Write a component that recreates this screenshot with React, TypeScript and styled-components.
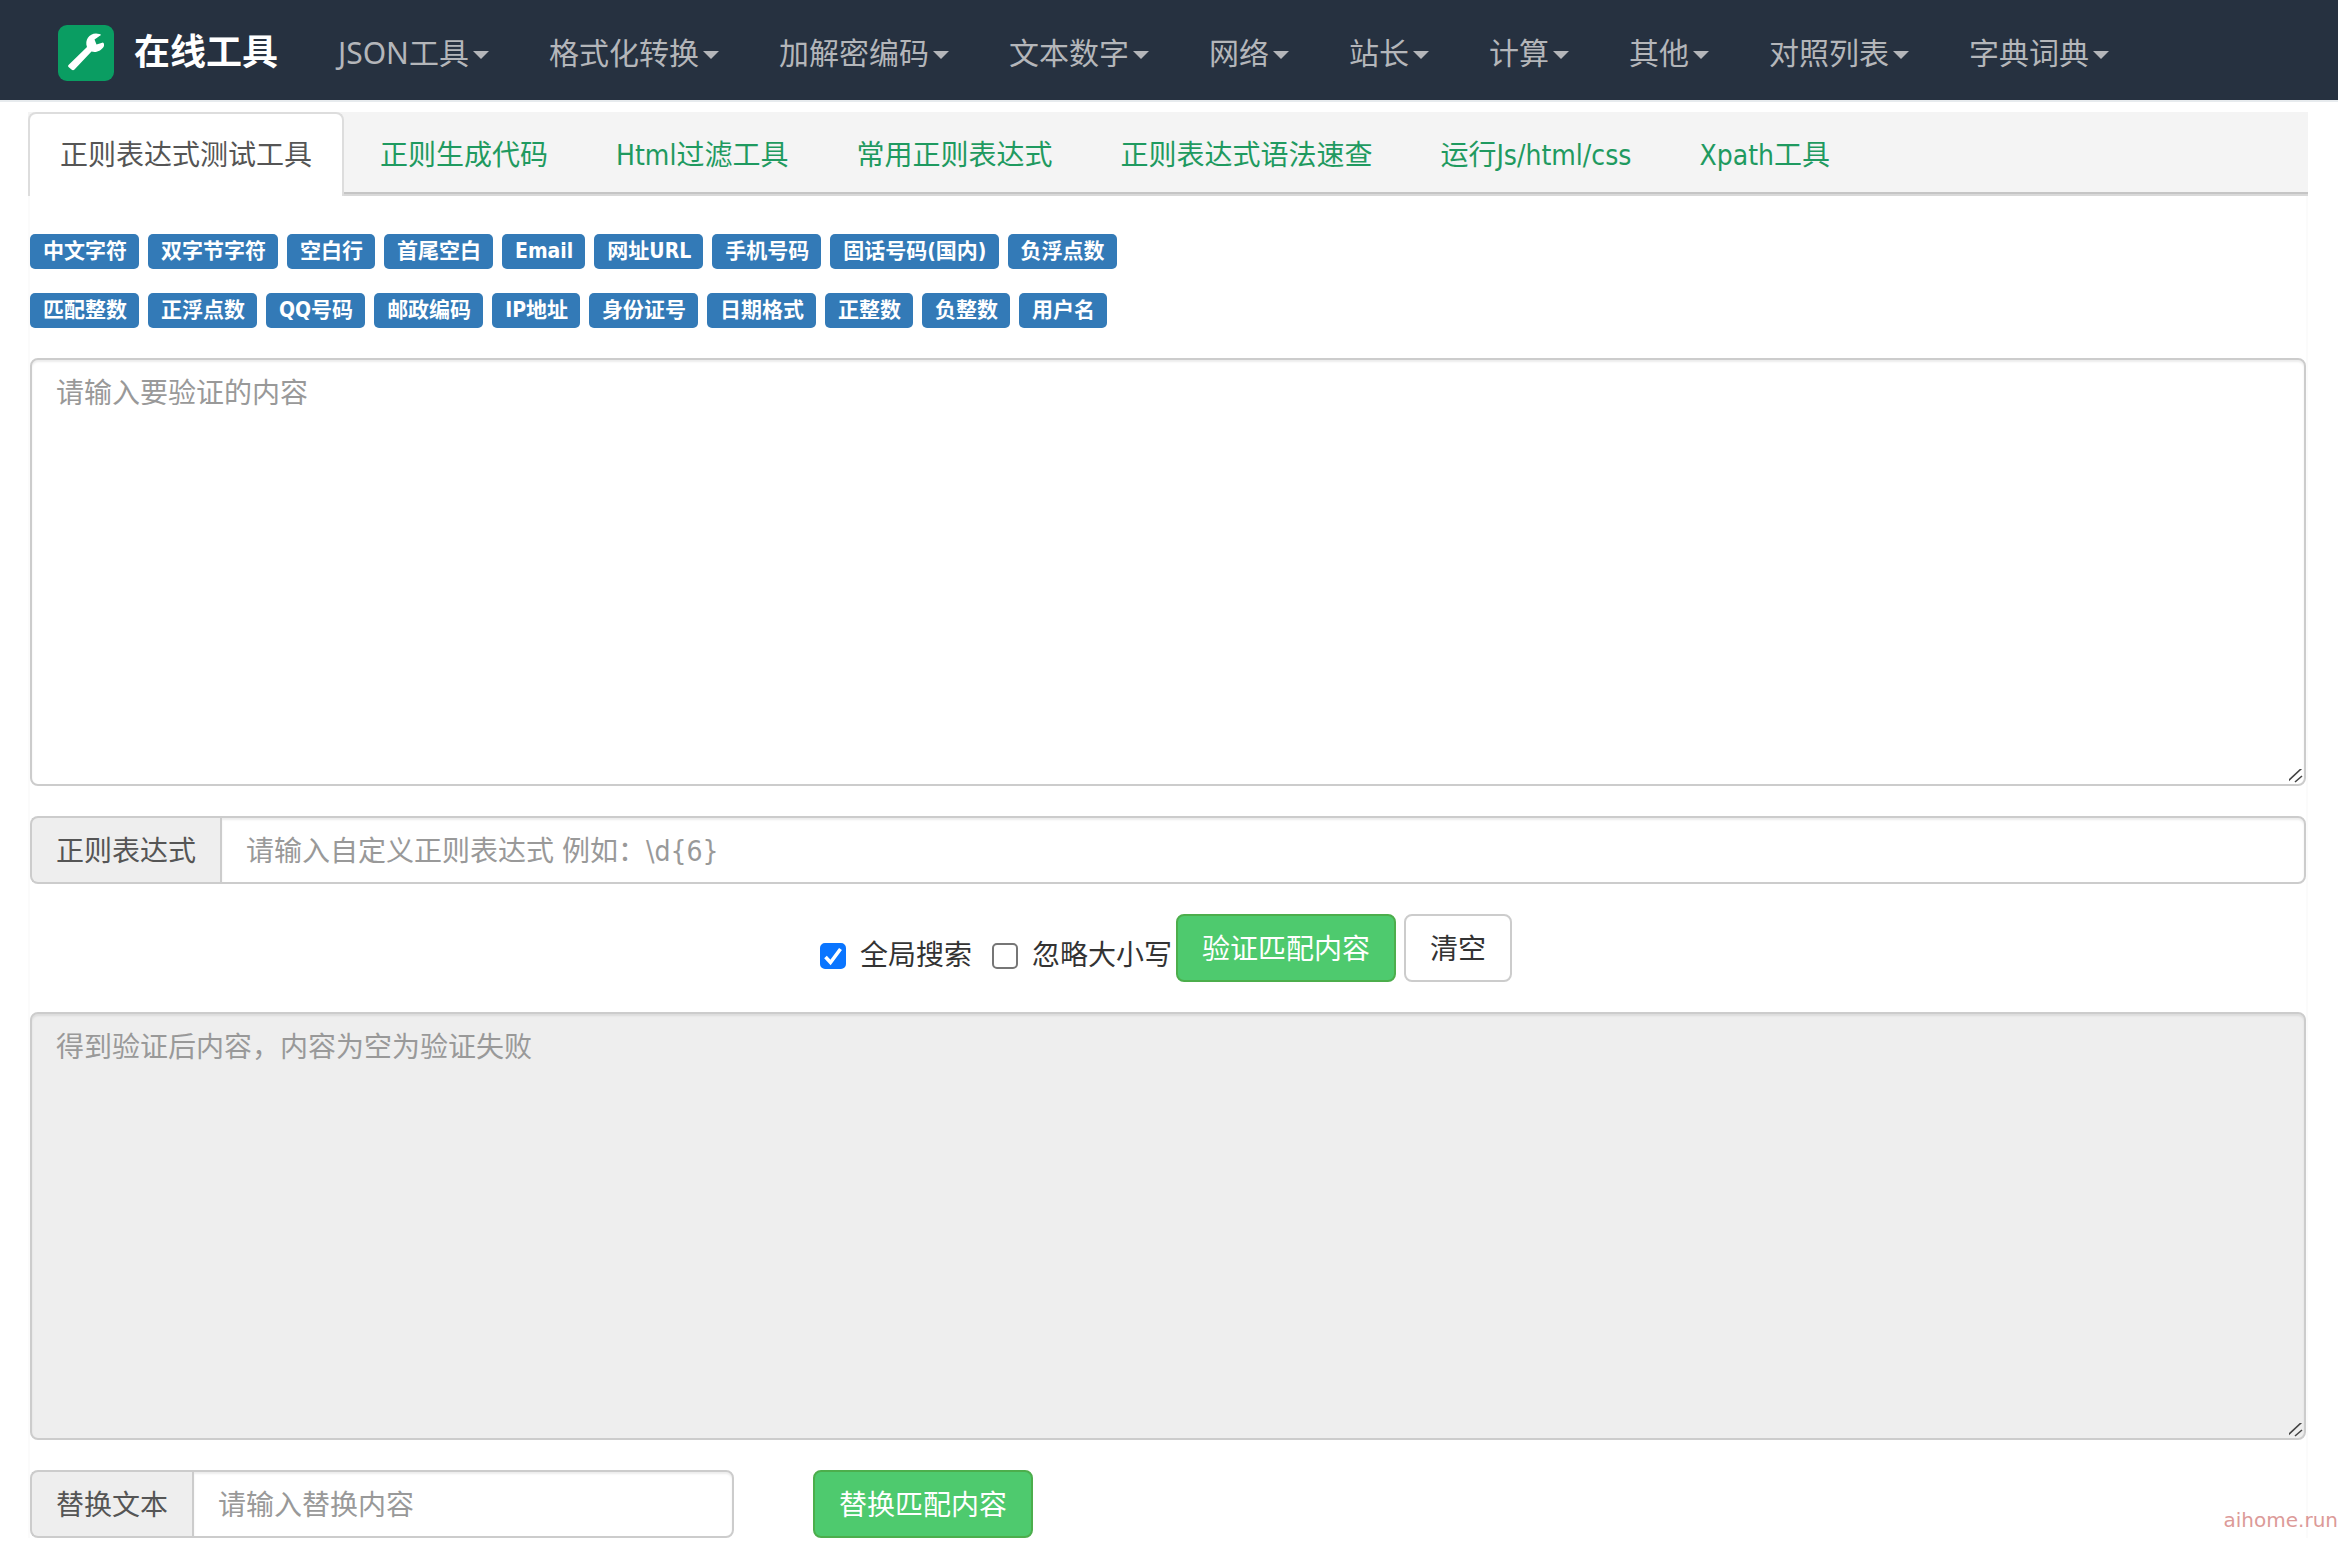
import React, { useState } from "react";
import styled, { createGlobalStyle } from "styled-components";

const cjk = `"Noto Sans CJK SC", sans-serif`;
const grip =
  "data:image/svg+xml,%3Csvg xmlns='http://www.w3.org/2000/svg' width='20' height='20'%3E%3Cpath d='M3 18L18 4M11 18L18 12' stroke='%23444' stroke-width='1.6' fill='none'/%3E%3C/svg%3E";

const GlobalStyle = createGlobalStyle`
  *, *::before, *::after { box-sizing: border-box; }
  body {
    margin: 0;
    background: #fff;
    color: #333;
    font: 28px/40px "DejaVu Sans Condensed", ${cjk};
  }
  button, input, textarea { font: inherit; }
`;

const Page = styled.div`
  position: relative;
  padding-bottom: 12px;
`;

const Navbar = styled.header`
  display: flex;
  align-items: center;
  height: 102px;
  padding: 5px 58px 0;
  background: #263140;
  border-bottom: 2px solid #e7ebee;
`;

const Brand = styled.a`
  display: flex;
  align-items: center;
  gap: 20px;
  margin-right: 30px;
  color: #fff;
  font-size: 36px;
  font-weight: 700;
  text-decoration: none;
  white-space: nowrap;
`;

const Menu = styled.nav`
  display: flex;
`;

const MenuButton = styled.button`
  display: flex;
  align-items: center;
  gap: 4px;
  padding: 0 30px;
  border: 0;
  background: none;
  color: #b4b6ba;
  font: 30px/40px "Noto Sans", ${cjk};
  white-space: nowrap;
  cursor: pointer;
`;

const Caret = styled.span`
  margin-top: 4px;
  border-top: 8px solid;
  border-left: 8px solid transparent;
  border-right: 8px solid transparent;
`;

const Tabs = styled.nav`
  display: flex;
  gap: 4px;
  height: 84px;
  margin: 10px 30px 0 28px;
  background: #f4f4f4;
  box-shadow: inset 0 -2px #d9d9d9, inset 0 -4px #c5c5c5;
`;

const Tab = styled.a<{ $active?: boolean }>`
  display: flex;
  align-items: center;
  padding: 2px 30px 0;
  border: 2px solid ${(p) => (p.$active ? "#ddd" : "transparent")};
  border-bottom: 0;
  border-radius: 8px 8px 0 0;
  background: ${(p) => (p.$active ? "#fff" : "transparent")};
  color: ${(p) => (p.$active ? "#555" : "#1f9a60")};
  text-decoration: none;
  white-space: nowrap;
`;

const Panel = styled.main`
  display: flex;
  flex-direction: column;
  gap: 30px;
  margin: 0 30px 0 28px;
  padding-top: 38px;
  border: 0 solid #fbfbfb;
  border-width: 0 2px;
`;

const BadgeRows = styled.div`
  display: flex;
  flex-direction: column;
  gap: 24px;
`;

const BadgeRow = styled.div`
  display: flex;
  flex-wrap: wrap;
  gap: 9px;
`;

const Badge = styled.button`
  height: 35px;
  padding: 0 12px 0 13px;
  border: 0;
  border-radius: 5px;
  background: #337ab7;
  color: #fff;
  font-size: 21px;
  line-height: 35px;
  font-weight: 700;
  white-space: nowrap;
  cursor: pointer;
`;

const TextBox = styled.textarea`
  display: block;
  width: 100%;
  height: 428px;
  padding: 14px 24px 12px;
  border: 2px solid #ccc;
  border-radius: 8px;
  background: ${(p) => (p.readOnly ? "#eee" : "#fff")};
  box-shadow: inset 0 2px 2px rgba(0, 0, 0, 0.075);
  color: #555;
  outline: 0;
  resize: vertical;

  &::placeholder {
    color: #999;
  }
  &::-webkit-scrollbar {
    width: 20px;
  }
  &::-webkit-resizer {
    background: url("${grip}") no-repeat right bottom;
  }
`;

const InputGroup = styled.div<{ $width?: string }>`
  display: flex;
  width: ${(p) => p.$width ?? "100%"};
  max-width: 100%;
  height: 68px;
`;

const Addon = styled.label`
  display: flex;
  align-items: center;
  padding: 4px 24px 0;
  border: 2px solid #ccc;
  border-right: 0;
  border-radius: 8px 0 0 8px;
  background: #eee;
  color: #555;
  white-space: nowrap;
`;

const Input = styled.input`
  flex: 1;
  min-width: 0;
  padding: 4px 24px 0;
  border: 2px solid #ccc;
  border-radius: 0 8px 8px 0;
  background: #fff;
  box-shadow: inset 0 2px 2px rgba(0, 0, 0, 0.075);
  color: #555;
  outline: 0;

  &::placeholder {
    color: #999;
  }
`;

const Actions = styled.div`
  display: flex;
  justify-content: center;
  padding-right: 4px;
`;

const CheckLabel = styled.label`
  display: flex;
  align-items: center;
  gap: 14px;
  margin-right: 20px;
  padding-top: 16px;
  white-space: nowrap;

  & + button {
    margin-left: -16px;
  }
`;

const Check = styled.input`
  appearance: none;
  width: 26px;
  height: 26px;
  margin: 0;
  border: 2px solid #767676;
  border-radius: 5px;
  background: #fff;

  &:checked {
    border-color: #0a75ff;
    background: #0a75ff
      url("data:image/svg+xml,%3Csvg xmlns='http://www.w3.org/2000/svg' viewBox='0 0 22 22'%3E%3Cpath d='M3.500 12l5 5.500L18.500 4' stroke='white' stroke-width='3.600' fill='none'/%3E%3C/svg%3E")
      center / 22px no-repeat;
  }
`;

const Button = styled.button<{ $primary?: boolean }>`
  height: 68px;
  padding: 4px 24px 0;
  border: 2px solid ${(p) => (p.$primary ? "#4cae4c" : "#ccc")};
  border-radius: 8px;
  background: ${(p) => (p.$primary ? "#4eca6e" : "#fff")};
  color: ${(p) => (p.$primary ? "#fff" : "#333")};
  white-space: nowrap;
  cursor: pointer;

  & + & {
    margin-left: 8px;
  }
`;

const ReplaceRow = styled.div`
  display: flex;
  gap: 79px;
`;

const Watermark = styled.span`
  position: absolute;
  right: 0;
  bottom: 10px;
  color: #dc9a98;
  font: 20px/40px "DejaVu Sans", sans-serif;
`;

const menus = ["JSON工具", "格式化转换", "加解密编码", "文本数字", "网络", "站长", "计算", "其他", "对照列表", "字典词典"];
const tabs = ["正则表达式测试工具", "正则生成代码", "Html过滤工具", "常用正则表达式", "正则表达式语法速查", "运行Js/html/css", "Xpath工具"];
const badges = [
  ["中文字符", "双字节字符", "空白行", "首尾空白", "Email", "网址URL", "手机号码", "固话号码(国内)", "负浮点数"],
  ["匹配整数", "正浮点数", "QQ号码", "邮政编码", "IP地址", "身份证号", "日期格式", "正整数", "负整数", "用户名"],
];

const Logo = () => (
  <svg width="56" height="56" viewBox="0 0 56 56" aria-hidden="true">
    <rect width="56" height="56" rx="9" fill="#0a9d62" />
    <path
      d="M10.500 40L29 22C26.500 15 31 8.500 38 8.500Q42 8.500 43 10L36.500 14.500L38.500 19.500L45 17.500Q46.500 18 46 21C43.500 26 38 28 33.500 26.500L16.500 44.500Q15 46 13.500 44.500L10.500 42Q9.500 41 10.500 40Z"
      fill="#fff"
    />
  </svg>
);

export default function App() {
  const [globalSearch, setGlobalSearch] = useState(true);
  const [ignoreCase, setIgnoreCase] = useState(false);

  return (
    <Page>
      <GlobalStyle />
      <Navbar>
        <Brand href="#">
          <Logo />
          在线工具
        </Brand>
        <Menu>
          {menus.map((name) => (
            <MenuButton key={name} type="button">
              {name}
              <Caret />
            </MenuButton>
          ))}
        </Menu>
      </Navbar>
      <Tabs>
        {tabs.map((name, i) => (
          <Tab key={name} href="#" $active={i === 0}>
            {name}
          </Tab>
        ))}
      </Tabs>
      <Panel>
        <BadgeRows>
          {badges.map((row, i) => (
            <BadgeRow key={i}>
              {row.map((name) => (
                <Badge key={name} type="button">
                  {name}
                </Badge>
              ))}
            </BadgeRow>
          ))}
        </BadgeRows>
        <TextBox aria-label="验证内容" placeholder="请输入要验证的内容" />
        <InputGroup>
          <Addon htmlFor="pattern">正则表达式</Addon>
          <Input id="pattern" type="text" placeholder="请输入自定义正则表达式 例如：\d{6}" />
        </InputGroup>
        <Actions>
          <CheckLabel>
            <Check type="checkbox" checked={globalSearch} onChange={(e) => setGlobalSearch(e.target.checked)} />
            全局搜索
          </CheckLabel>
          <CheckLabel>
            <Check type="checkbox" checked={ignoreCase} onChange={(e) => setIgnoreCase(e.target.checked)} />
            忽略大小写
          </CheckLabel>
          <Button type="button" $primary>
            验证匹配内容
          </Button>
          <Button type="button">清空</Button>
        </Actions>
        <TextBox readOnly aria-label="验证结果" placeholder="得到验证后内容，内容为空为验证失败" />
        <ReplaceRow>
          <InputGroup $width="704px">
            <Addon htmlFor="replacement">替换文本</Addon>
            <Input id="replacement" type="text" placeholder="请输入替换内容" />
          </InputGroup>
          <Button type="button" $primary>
            替换匹配内容
          </Button>
        </ReplaceRow>
      </Panel>
      <Watermark>aihome.run</Watermark>
    </Page>
  );
}
